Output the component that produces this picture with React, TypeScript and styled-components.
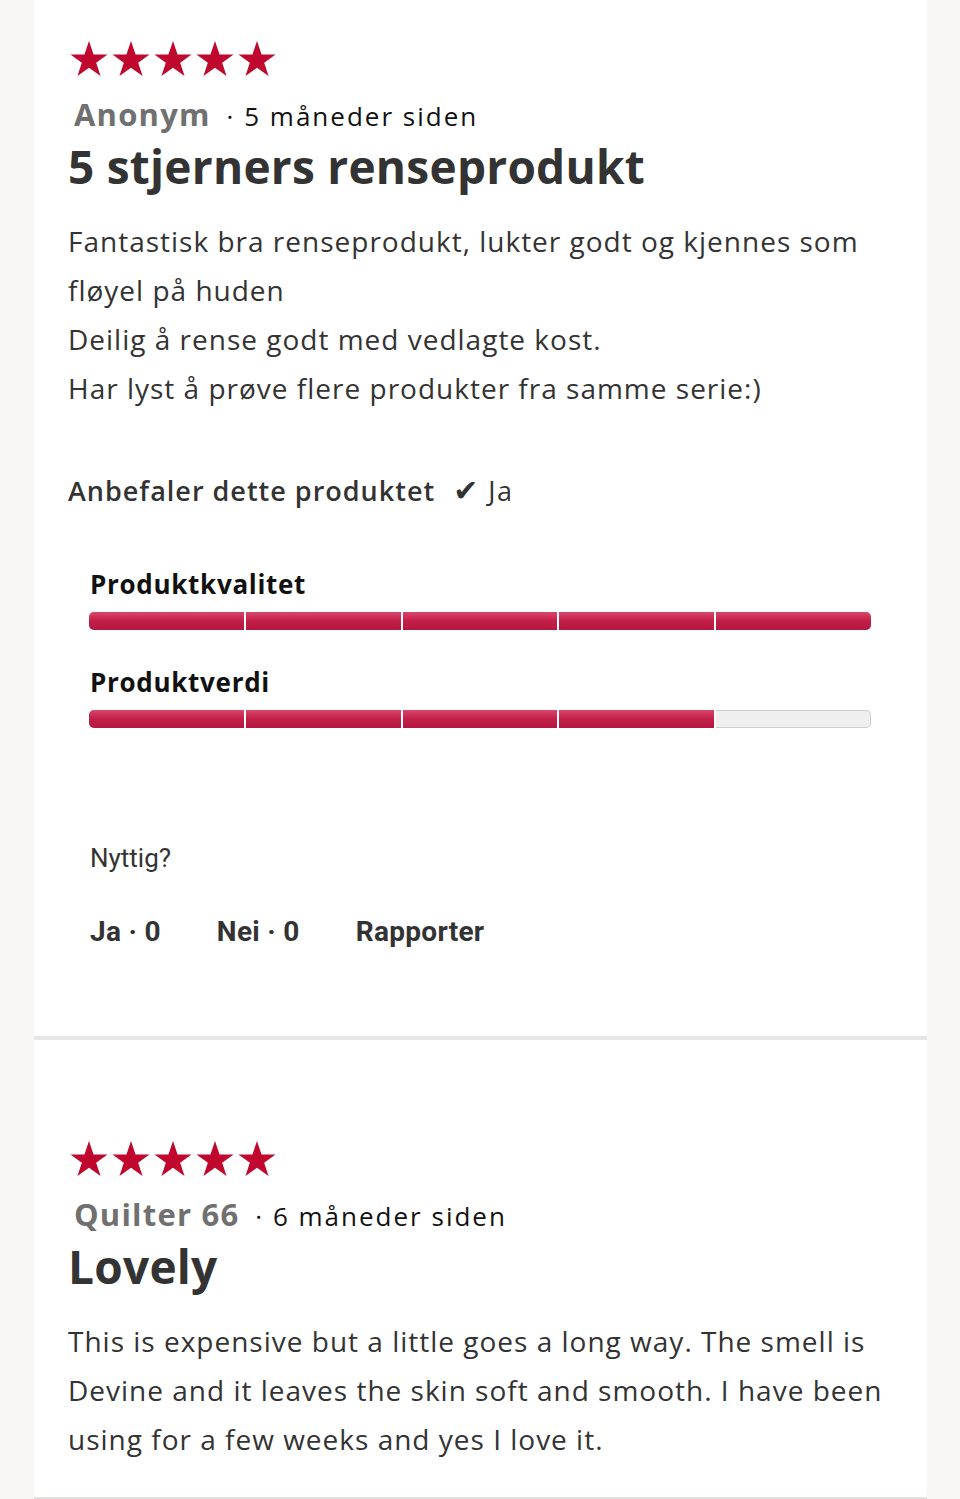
import React from 'react';
import styled, { createGlobalStyle } from 'styled-components';

const GlobalStyle = createGlobalStyle`
  html, body {
    margin: 0;
    padding: 0;
    background: #f8f7f6;
  }
  body {
    font-family: "Open Sans", "Liberation Sans", sans-serif;
  }
`;

interface Review {
  author: string;
  when: string;
  title: string;
  lines: string[];
  recommend?: boolean;
  ratings?: { label: string; value: number }[];
  helpful?: boolean;
}

const reviews: Review[] = [
  {
    author: 'Anonym',
    when: '5 måneder siden',
    title: '5 stjerners renseprodukt',
    lines: [
      'Fantastisk bra renseprodukt, lukter godt og kjennes som fløyel på huden',
      'Deilig å rense godt med vedlagte kost.',
      'Har lyst å prøve flere produkter fra samme serie:)',
    ],
    recommend: true,
    ratings: [
      { label: 'Produktkvalitet', value: 5 },
      { label: 'Produktverdi', value: 4 },
    ],
    helpful: true,
  },
  {
    author: 'Quilter 66',
    when: '6 måneder siden',
    title: 'Lovely',
    lines: [
      'This is expensive but a little goes a long way. The smell is Devine and it leaves the skin soft and smooth. I have been using for a few weeks and yes I love it.',
    ],
  },
];

const Star = () => (
  <svg width="42" height="42" viewBox="0 0 24 24">
    <path
      fill="#c0072d"
      d="M12 1.2l2.6 7.6h8l-6.5 4.7 2.5 7.7L12 16.4l-6.6 4.8 2.5-7.7L1.4 8.8h8z"
    />
  </svg>
);

const RatingBar: React.FC<{ value: number }> = ({ value }) => (
  <Track>
    {[0, 1, 2, 3, 4].map((i) => (
      <Segment key={i} $on={i < value} $last={i === 4} />
    ))}
  </Track>
);

const App: React.FC = () => (
  <>
    <GlobalStyle />
    <Page>
      {reviews.map((r, idx) => (
        <Card key={idx} $first={idx === 0}>
          <Stars>
            {[0, 1, 2, 3, 4].map((i) => (
              <Star key={i} />
            ))}
          </Stars>
          <Meta>
            <Author>{r.author}</Author>
            <When>· {r.when}</When>
          </Meta>
          <Title>{r.title}</Title>
          <Body>
            {r.lines.map((l, i) => (
              <p key={i}>{l}</p>
            ))}
          </Body>
          {r.recommend && (
            <Recommend>
              Anbefaler dette produktet
              <Check>✔</Check>
              <Yes>Ja</Yes>
            </Recommend>
          )}
          {r.ratings && (
            <Ratings>
              {r.ratings.map((rt) => (
                <RatingRow key={rt.label}>
                  <RatingLabel>{rt.label}</RatingLabel>
                  <RatingBar value={rt.value} />
                </RatingRow>
              ))}
            </Ratings>
          )}
          {r.helpful && (
            <Helpful>
              <HelpfulQ>Nyttig?</HelpfulQ>
              <Actions>
                <Action>Ja · 0</Action>
                <Action>Nei · 0</Action>
                <Action>Rapporter</Action>
              </Actions>
            </Helpful>
          )}
        </Card>
      ))}
    </Page>
  </>
);

const Page = styled.div`
  width: 893px;
  margin-left: 34px;
  background: #fff;
  border-bottom: 2px solid #e2e1df;
`;

const Card = styled.section<{ $first: boolean }>`
  padding: ${(p) => (p.$first ? '38px 34px 88px' : '98px 34px 33px')};
  border-bottom: ${(p) => (p.$first ? '4px solid #e6e6e6' : 'none')};
`;

const Stars = styled.div`
  display: flex;
  height: 44px;
  align-items: center;
`;

const Meta = styled.div`
  display: flex;
  align-items: baseline;
  gap: 16px;
  margin-left: 6px;
  margin-top: 12px;
  line-height: 40px;
`;

const Author = styled.span`
  font-size: 31px;
  font-weight: 700;
  color: #707070;
  letter-spacing: 1.2px;
`;

const When = styled.span`
  font-size: 26px;
  color: #111;
  letter-spacing: 2px;
`;

const Title = styled.h2`
  margin: 2px 0 0;
  font-size: 46px;
  font-weight: 700;
  color: #333;
  line-height: 56px;
  letter-spacing: 0.25px;
`;

const Body = styled.div`
  margin-top: 23px;
  font-size: 28px;
  line-height: 49px;
  letter-spacing: 1px;
  color: #333;
  p {
    margin: 0;
  }
`;

const Recommend = styled.div`
  margin-top: 58px;
  display: flex;
  align-items: baseline;
  font-size: 27px;
  font-weight: 600;
  letter-spacing: 1px;
  color: #333;
  line-height: 40px;
`;

const Check = styled.span`
  margin-left: 18px;
  font-family: "DejaVu Sans", sans-serif;
  font-size: 30px;
`;

const Yes = styled.span`
  margin-left: 9px;
  font-weight: 400;
  letter-spacing: 1.5px;
`;

const Ratings = styled.div`
  margin-top: 53px;
  padding: 0 22px;
  display: flex;
  flex-direction: column;
  gap: 32px;
`;

const RatingRow = styled.div`
  display: flex;
  flex-direction: column;
  gap: 8px;
`;

const RatingLabel = styled.div`
  font-size: 26px;
  font-weight: 700;
  color: #111;
  letter-spacing: 0.7px;
  line-height: 40px;
`;

const Track = styled.div`
  display: flex;
  height: 18px;
  width: 782px;
  margin-left: -1px;
  border-radius: 5px;
  overflow: hidden;
  background: #efefef;
  box-shadow: inset 0 0 0 1px #cfcfcf;
`;

const Segment = styled.div<{ $on: boolean; $last: boolean }>`
  flex: 1;
  border-right: ${(p) => (p.$last ? 'none' : `2px solid ${p.$on ? '#fff' : 'transparent'}`)};
  background: ${(p) =>
    p.$on ? 'linear-gradient(#d9466a, #c21e48 50%, #b5173f)' : 'transparent'};
`;

const Helpful = styled.div`
  margin-top: 115px;
  padding-left: 22px;
  font-family: Roboto, "Liberation Sans", sans-serif;
`;

const HelpfulQ = styled.div`
  font-size: 26px;
  color: #333;
  line-height: 30px;
`;

const Actions = styled.div`
  margin-top: 43px;
  display: flex;
  gap: 56px;
`;

const Action = styled.span`
  font-size: 28px;
  font-weight: 700;
  letter-spacing: 0.3px;
  color: #333;
  line-height: 32px;
`;

export default App;
